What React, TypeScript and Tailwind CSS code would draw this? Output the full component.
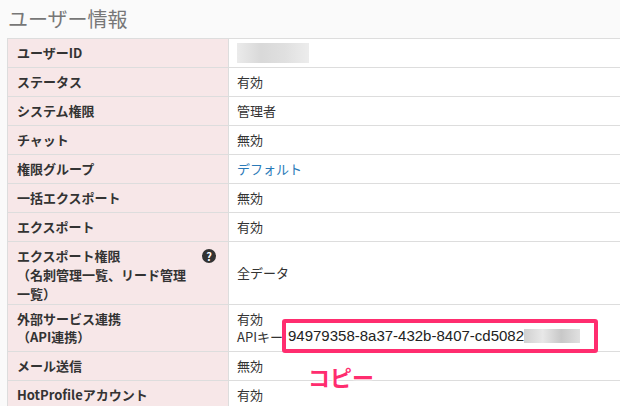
export default function App() {
  const rows: [string, React.ReactNode, string][] = [
    ["ユーザーID", <div className="w-[72px] h-[20px] bg-[linear-gradient(90deg,#e6e6e6,#cfcfcf,#d8d8d8,#e8e8e8)] opacity-80" />, "h-[29px]"],
    ["ステータス", "有効", "h-[29px]"],
    ["システム権限", "管理者", "h-[29px]"],
    ["チャット", "無効", "h-[29px]"],
    ["権限グループ", <span className="text-[#2a7ab8]">デフォルト</span>, "h-[29px]"],
    ["一括エクスポート", "無効", "h-[29px]"],
    ["エクスポート", "有効", "h-[29px]"],
  ];
  const cellL = "w-[221px] bg-[#f7e7e8] border-r border-[#ddd] px-[9px] font-bold text-[13px] text-[#333]";
  const cellR = "flex-1 px-[8px] text-[13px] text-[#333]";
  return (
    <div className="w-[620px] h-[406px] overflow-hidden bg-[#fafafa] relative" style={{ fontFamily: '"Noto Sans CJK JP","Noto Sans",sans-serif' }}>
      <div className="h-[38px] px-[8px] pt-[4px] text-[20px] text-[#777]">ユーザー情報</div>
      <div className="ml-[7px] border-t border-l border-[#ddd] bg-white">
        {rows.map(([l, r, h], i) => (
          <div key={i} className={`flex border-b border-[#ddd] ${h}`}>
            <div className={`${cellL} flex items-center`}>{l}</div>
            <div className={`${cellR} flex items-center`}>{r}</div>
          </div>
        ))}
        <div className="flex border-b border-[#ddd] h-[63px]">
          <div className={`${cellL} pt-[4px] leading-[19px] relative`}>
            エクスポート権限<br />（名刺管理一覧、リード管理<br />一覧）
            <span className="absolute right-[12px] top-[7px] w-[14px] h-[14px] rounded-full bg-[#333] text-white text-[11px] leading-[14px] text-center">?</span>
          </div>
          <div className={`${cellR} flex items-center`}>全データ</div>
        </div>
        <div className="flex border-b border-[#ddd] h-[47px]">
          <div className={`${cellL} pt-[5px] leading-[18px]`}>外部サービス連携<br />（API連携）</div>
          <div className={`${cellR} pt-[5px] leading-[18px]`}>有効<br />APIキー</div>
        </div>
        <div className="flex border-b border-[#ddd] h-[29px]">
          <div className={`${cellL} flex items-center`}>メール送信</div>
          <div className={`${cellR} flex items-center`}>無効</div>
        </div>
        <div className="flex border-b border-[#ddd] h-[29px]">
          <div className={`${cellL} flex items-center`}>HotProfileアカウント</div>
          <div className={`${cellR} flex items-center`}>有効</div>
        </div>
      </div>
      <div className="absolute left-[282px] top-[319px] w-[316px] h-[34px] border-[4px] border-[#ff2d6f] rounded-[3px] bg-white flex items-center pl-[2px] text-[15px] text-[#222]" style={{ fontFamily: '"Liberation Sans",sans-serif' }}>
        94979358-8a37-432b-8407-cd5082
        <span className="w-[56px] h-[14px] bg-[linear-gradient(90deg,#d0d0d0,#e8e8e8,#c8c8c8,#e0e0e0)]" />
      </div>
      <div className="absolute left-[308px] top-[360px] text-[22px] font-bold text-[#ff2d6f]" style={{ textShadow: "0 0 2px #fff,0 0 2px #fff,0 0 3px #fff" }}>コピー</div>
    </div>
  );
}
